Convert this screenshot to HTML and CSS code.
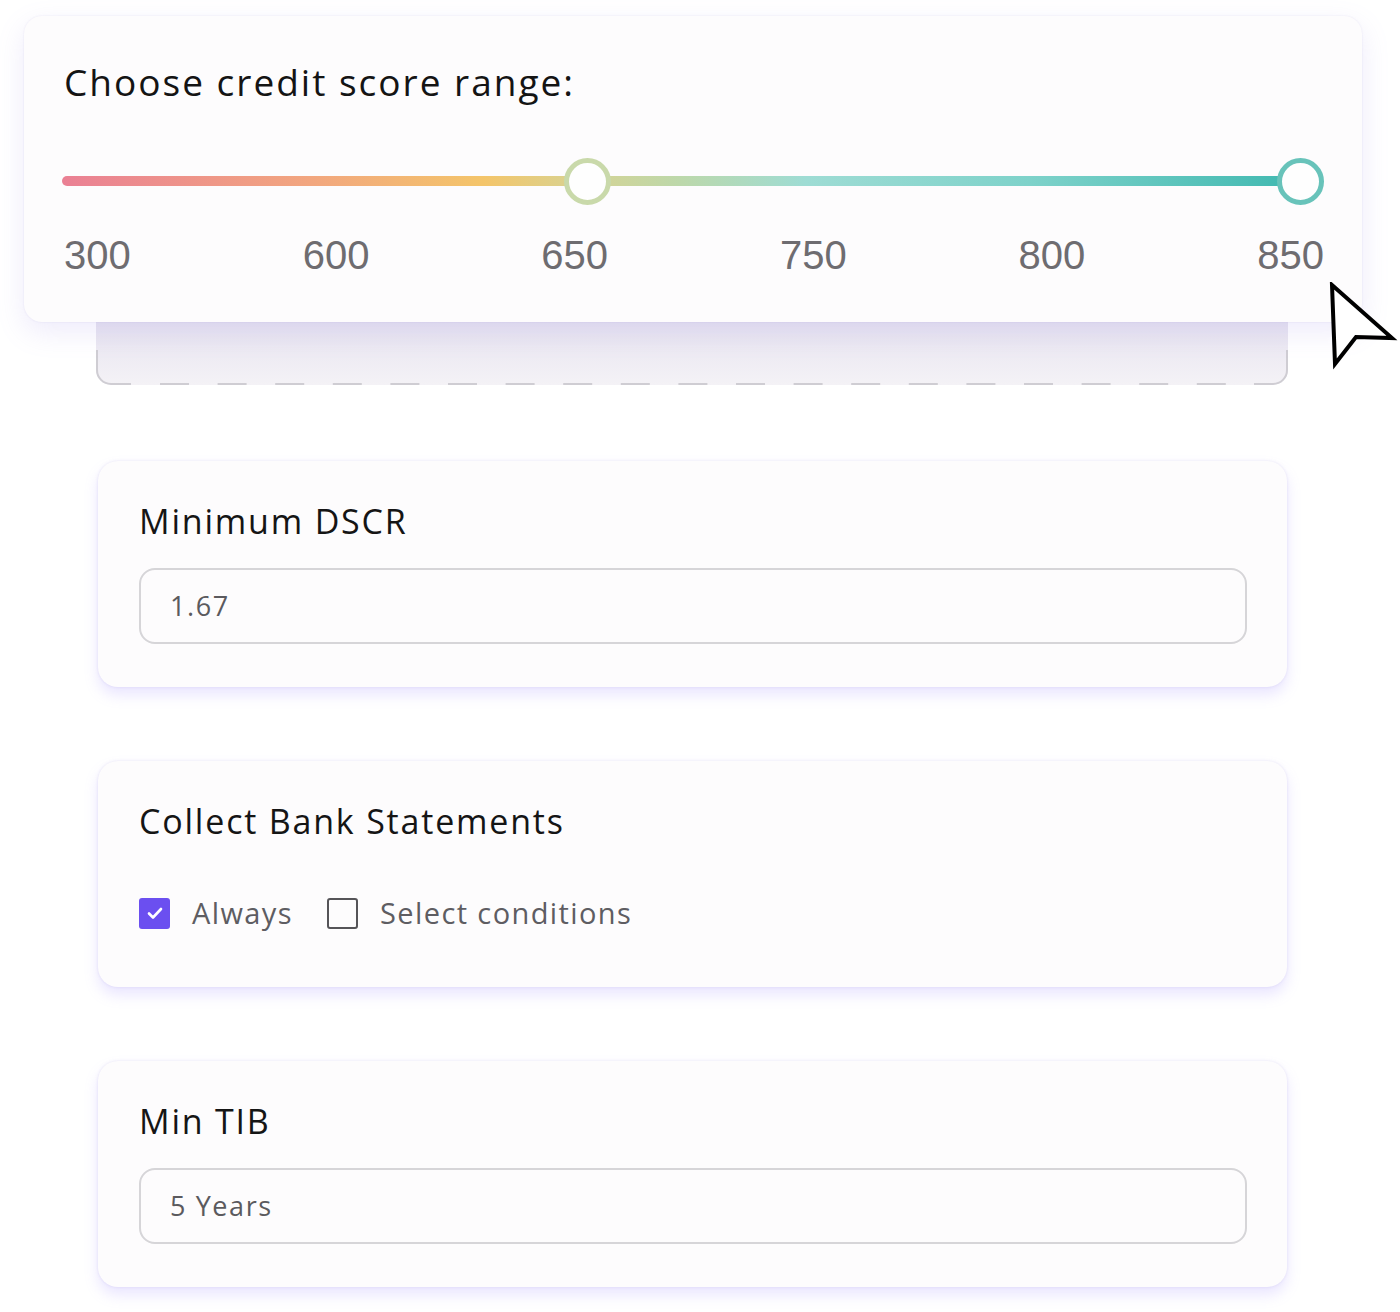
FILE: index.html
```html
<!DOCTYPE html>
<html lang="en">
<head>
<meta charset="utf-8">
<title>Credit criteria</title>
<link rel="stylesheet" href="styles.css">
</head>
<body>
<main class="page">
  <section class="range-card">
    <h2 class="range-title">Choose credit score range:</h2>
    <div class="slider">
      <div class="track"></div>
      <span class="thumb thumb-low"></span>
      <span class="thumb thumb-high"></span>
    </div>
    <div class="ticks">
      <span>300</span><span>600</span><span>650</span><span>750</span><span>800</span><span>850</span>
    </div>
  </section>
  <div class="ghost-card">
    <svg class="ghost-outline" width="1192" height="103" viewBox="0 0 1192 103">
      <path d="M1 68 V88 A14 14 0 0 0 15 102 H35" fill="none" stroke="#cfcdd3" stroke-width="2"/>
      <path d="M64 102 H1130" fill="none" stroke="#cfcdd3" stroke-width="2" stroke-dasharray="29 28.6"/>
      <path d="M1158 102 H1177 A14 14 0 0 0 1191 88 V68" fill="none" stroke="#cfcdd3" stroke-width="2"/>
    </svg>
  </div>

  <section class="card">
    <h3 class="card-title">Minimum DSCR</h3>
    <div class="field">1.67</div>
  </section>

  <section class="card">
    <h3 class="card-title">Collect Bank Statements</h3>
    <div class="options">
      <label class="option">
        <span class="box box-checked">
          <svg width="20" height="20" viewBox="0 0 20 20"><path d="M4 10.5l4 4 8-8.5" fill="none" stroke="#fff" stroke-width="2.6" stroke-linecap="round" stroke-linejoin="round"/></svg>
        </span>
        <span class="option-text">Always</span>
      </label>
      <label class="option">
        <span class="box"></span>
        <span class="option-text">Select conditions</span>
      </label>
    </div>
  </section>

  <section class="card">
    <h3 class="card-title">Min TIB</h3>
    <div class="field">5 Years</div>
  </section>

  <svg class="cursor" width="70" height="90" viewBox="0 0 70 90">
    <path d="M3 3 L6 82 L27 55 L63 56 Z" fill="#fff" stroke="#000" stroke-width="4" stroke-linejoin="miter"/>
  </svg>
</main>
</body>
</html>
```

FILE: styles.css
```css
html, body {
  margin: 0;
  padding: 0;
  background: #ffffff;
}
body {
  width: 1400px;
  height: 1312px;
  overflow: hidden;
  font-family: "Open Sans", "Noto Sans", sans-serif;
}
.page {
  position: relative;
  padding-top: 16px;
}
.range-card {
  position: relative;
  z-index: 2;
  margin-left: 24px;
  width: 1338px;
  height: 306px;
  box-sizing: border-box;
  padding: 44px 38px 0 40px;
  background: #fdfcfd;
  border-radius: 18px;
  box-shadow: 0 10px 28px rgba(150, 130, 230, 0.16), 0 0 2px rgba(180, 170, 220, 0.25);
}
.range-title {
  margin: 0;
  font-weight: 400;
  font-size: 37px;
  line-height: 44px;
  color: #141414;
  letter-spacing: 2px;
}
.slider {
  position: relative;
  height: 48px;
  margin-top: 53px;
}
.track {
  position: absolute;
  left: -2px;
  right: 22px;
  top: 19px;
  height: 10px;
  border-radius: 5px;
  background: linear-gradient(90deg, #ea8094 0%, #f2a67f 20%, #f4c56a 34%, #d7d393 42%, #bcd8ab 50%, #9edcd4 60%, #7ed2ca 78%, #3fb8b0 100%);
}
.thumb {
  position: absolute;
  top: 0.5px;
  width: 47px;
  height: 47px;
  border-radius: 50%;
  background: #fefefe;
  box-sizing: border-box;
}
.thumb-low {
  left: 499.5px;
  border: 5px solid #c9d9aa;
}
.thumb-high {
  right: 0;
  border: 5px solid #68c3ba;
}
.ticks {
  display: flex;
  justify-content: space-between;
  margin-top: 27px;
  font-family: "Liberation Sans", Arial, sans-serif;
  font-size: 40px;
  line-height: 46px;
  color: #6e6c70;
}
.ghost-card {
  position: relative;
  z-index: 1;
  margin: -40px 0 0 96px;
  width: 1192px;
  height: 103px;
  border-radius: 0 0 15px 15px;
  background: linear-gradient(180deg, #dcd8e9 0%, #e8e5f0 45%, #f4f2f6 100%);
}
.ghost-outline {
  position: absolute;
  left: 0;
  top: 0;
}
.card {
  margin: 76px 0 0 98px;
  width: 1189px;
  height: 226px;
  box-sizing: border-box;
  padding: 38px 40px 0 41px;
  background: #fdfcfd;
  border-radius: 20px;
  box-shadow: 0 8px 14px rgba(160, 140, 255, 0.22), 0 0 3px rgba(190, 180, 230, 0.35);
}
.card + .card {
  margin-top: 74px;
}
.card-title {
  margin: 0;
  font-weight: 400;
  font-size: 34px;
  line-height: 44px;
  color: #151515;
  letter-spacing: 1.8px;
}
.field {
  margin-top: 25px;
  height: 76px;
  box-sizing: border-box;
  border: 2px solid #d6d5d8;
  border-radius: 16px;
  padding-left: 29px;
  font-size: 27px;
  line-height: 72px;
  color: #5b5a5e;
  letter-spacing: 1.6px;
}
.options {
  display: flex;
  align-items: center;
  gap: 34px;
  margin-top: 52px;
}
.option {
  display: flex;
  align-items: center;
  gap: 22px;
}
.box {
  width: 31px;
  height: 31px;
  box-sizing: border-box;
  border: 2.5px solid #555458;
  border-radius: 3px;
  display: flex;
  align-items: center;
  justify-content: center;
}
.box-checked {
  background: #6b4ff0;
  border: none;
}
.option-text {
  font-size: 29px;
  line-height: 36px;
  color: #5e5d62;
  letter-spacing: 1.4px;
}
.cursor {
  position: absolute;
  left: 1329px;
  top: 282px;
  z-index: 3;
}
```
